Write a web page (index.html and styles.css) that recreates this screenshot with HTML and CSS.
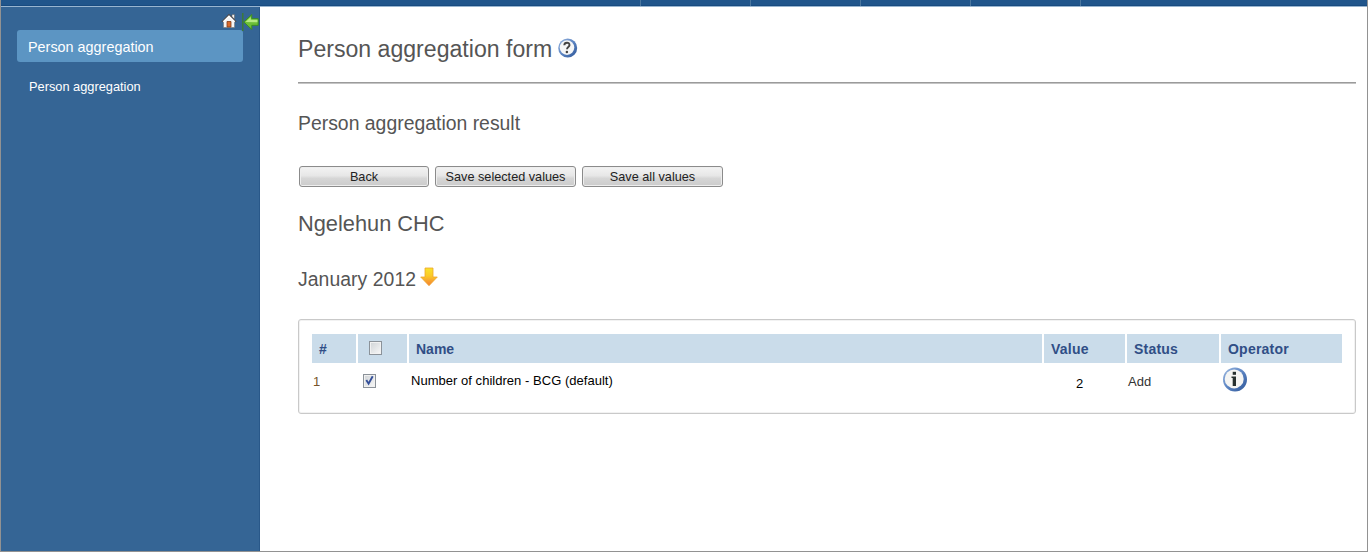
FILE: index.html
```html
<!DOCTYPE html>
<html lang="en">
<head>
<meta charset="utf-8">
<title>Person aggregation</title>
<link rel="stylesheet" href="styles.css">
</head>
<body>
<div class="window">
  <header class="topbar"><i class="tab"></i><i class="tab"></i><i class="tab"></i><i class="tab"></i><i class="tab"></i></header>
  <div class="body">
    <aside class="sidebar">
      <div class="tools">
        <svg class="home" width="16" height="16" viewBox="0 0 16 16"><path d="M11 1.500h2.500V6L11 4z" fill="#eee" stroke="#555" stroke-width=".5"/><path d="M2.500 8L8 3l5.500 5v6.500h-11z" fill="#f5f5f5" stroke="#777" stroke-width=".6"/><path d="M.8 8.800L8 1.600l7.200 7.200" fill="none" stroke="#544b48" stroke-width="1.200"/><path d="M2.300 8.800L8 3.200l5.700 5.600" fill="none" stroke="#fff" stroke-width="1.200"/><path d="M6 8.500h4V14H6z" fill="#d96b2b" stroke="#813b1b" stroke-width=".8"/></svg>
        <svg class="collapse" width="17" height="18" viewBox="0 0 17 18"><path d="M.8 0v18" stroke="#3d7d2c" stroke-width="1.300"/><path d="M1.800 9l8-7.500v4.200h6.400v6.600H9.800v4.200z" fill="#6dbe38" stroke="#398d20"/><path d="M3.500 9l5.300-5v2.800h6.700v2.400z" fill="#b5e982"/></svg>
      </div>
      <h2 class="menu-title">Person aggregation</h2>
      <a class="menu-link">Person aggregation</a>
    </aside>
    <main class="content">
      <h1 class="title">Person aggregation form
        <svg class="help" width="20" height="20" viewBox="0 0 20 20"><defs><linearGradient id="ring" x1="0" y1="0" x2="1" y2="1"><stop offset="0" stop-color="#9db9e0"/><stop offset=".45" stop-color="#6088c5"/><stop offset="1" stop-color="#2d5698"/></linearGradient></defs><circle cx="9.700" cy="10" r="9.500" fill="url(#ring)"/><circle cx="9" cy="9.600" r="7.300" fill="#f5f6f7"/><path d="M6.300 7.300c.1-3.500 5.400-3.300 5.200-.2-.1 2-2.500 1.900-2.500 4.200" fill="none" stroke="#444" stroke-width="1.900"/><circle cx="8.900" cy="14" r="1.250" fill="#444"/></svg>
      </h1>
      <div class="rule"></div>
      <h3 class="subtitle result">Person aggregation result</h3>
      <div class="buttons"><button class="btn back">Back</button><button class="btn">Save selected values</button><button class="btn">Save all values</button></div>
      <h2 class="unit">Ngelehun CHC</h2>
      <h3 class="subtitle period">January 2012
        <svg class="down" width="18" height="20" viewBox="0 0 18 20"><defs><linearGradient id="gold" x1="0" y1="0" x2="0" y2="1"><stop offset="0" stop-color="#f8e32c"/><stop offset=".45" stop-color="#fbc928"/><stop offset="1" stop-color="#f47d35"/></linearGradient></defs><path d="M5 1h8v9h4.300L9 18.700.7 10H5z" fill="url(#gold)" stroke="#eda62b" stroke-width=".8"/></svg>
      </h3>
      <section class="panel">
        <div class="grid head"><div class="cell">#</div><div class="cell check-head"><i class="check"></i></div><div class="cell">Name</div><div class="cell wide">Value</div><div class="cell wide">Status</div><div class="cell wide">Operator</div></div>
        <div class="grid row">
          <div class="num">1</div>
          <div class="check-cell"><i class="check"><svg width="11" height="11" viewBox="0 0 11 11"><path d="M2.300 5l2.300 3.700L8.700 1.300" fill="none" stroke="#344f99" stroke-width="1.900"/></svg></i></div>
          <div class="name">Number of children - BCG (default)</div>
          <div class="value">2</div>
          <div class="status">Add</div>
          <div class="info"><svg width="25" height="25" viewBox="0 0 25 25"><circle cx="12" cy="12.500" r="12" fill="url(#ring)"/><circle cx="11.200" cy="11.900" r="9.500" fill="#f5f5f3"/><path d="M8.500 9.500H13V19H9.700v-8H8.500z" fill="#27302f"/><path d="M9.700 4.800H13v3H9.700z" fill="#27302f"/></svg></div>
        </div>
      </section>
    </main>
  </div>
</div>
</body>
</html>
```

FILE: styles.css
```css
* { box-sizing: border-box; }
body { margin: 0; font-family: "Liberation Sans", Arial, sans-serif; background: #fff; }
h1, h2, h3 { margin: 0; font-weight: 400; }
svg { display: block; flex: none; }
.window { height: 552px; border: solid #929292; border-width: 0 1px 1px; display: flex; flex-direction: column; }
.topbar { height: 7px; flex: none; background: linear-gradient(#20558b 0 5px, #184b80 5px 6px, #98b5d0 6px); display: flex; padding-left: 639px; }
.tab { width: 110px; height: 6px; border-left: 1px solid #4b779f; }
.body { flex: 1; display: flex; min-height: 0; }
.sidebar { width: 259px; flex: none; background: #356595; border-right: 1px solid #295889; color: #fff; }
.tools { height: 23px; display: flex; justify-content: flex-end; gap: 5px; padding-top: 6px; }
.menu-title { margin-left: 16px; width: 226px; height: 32px; border-radius: 3px; background: #5c95c3; padding-left: 11px; font-size: 14.4px; line-height: 34px; }
.menu-link { display: block; margin: 16px 0 0 28px; font-size: 12.8px; line-height: 18px; }
.content { flex: 1; padding: 25px 11px 0 38px; color: #555; }
.title { height: 34px; display: flex; align-items: center; font-size: 23.1px; gap: 6px; }
.help { margin-top: -3px; }
.rule { margin-top: 16px; height: 2px; background: linear-gradient(#9b9b9b 50%, #c4c4c4 50%); }
.subtitle { font-size: 19.4px; line-height: 24px; }
.result { margin-top: 27px; }
.buttons { display: flex; gap: 6px; margin: 31px 0 0 1px; }
.btn { width: 141px; height: 21px; padding: 0; border: 1px solid #8b8b8b; border-radius: 3px; box-shadow: inset 0 0 0 1px #eee; background: linear-gradient(#f3f3f3, #e7e7e7 45%, #d6d6d6 60%, #cbcbcb); font: 12.7px/18px "Liberation Sans", Arial, sans-serif; color: #222; }
.back { width: 130px; }
.unit { margin-top: 23px; font-size: 21.8px; line-height: 28px; }
.period { margin-top: 29px; display: flex; gap: 4px; height: 24px; letter-spacing: .05px; }
.panel { margin-top: 28px; height: 95px; border: 1px solid #c9c9c9; border-radius: 3px; padding: 14px 13px; box-shadow: inset 0 0 0 1px #f2f2f2; }
.grid { display: grid; grid-template-columns: 44px 49px 633px 81px 92px 1fr; column-gap: 2px; }
.head { height: 29px; grid-template-rows: 29px; color: #304e86; font-size: 14px; font-weight: 700; line-height: 30px; }
.cell { background: #cadcea; padding-left: 7px; }
.wide { letter-spacing: .22px; }
.check-head { padding: 7px 0 0 11px; }
.check { display: block; width: 13px; height: 14px; border: 1px solid #8b9299; background: linear-gradient(135deg, #cfd3d6, #f8f8f8); box-shadow: inset 0 0 0 1px #f1f1f1; }
.row { height: 36px; font-size: 13px; line-height: 18px; }
.num { padding: 10px 0 0 1px; color: #775329; }
.check-cell { padding: 11px 0 0 5px; }
.name { padding: 9px 0 0 2px; color: #000; letter-spacing: .03px; }
.value { padding: 12px 0 0 32px; color: #000; }
.status { padding: 10px 0 0 1px; color: #333; }
.info { padding: 4px 0 0 2px; }
```
